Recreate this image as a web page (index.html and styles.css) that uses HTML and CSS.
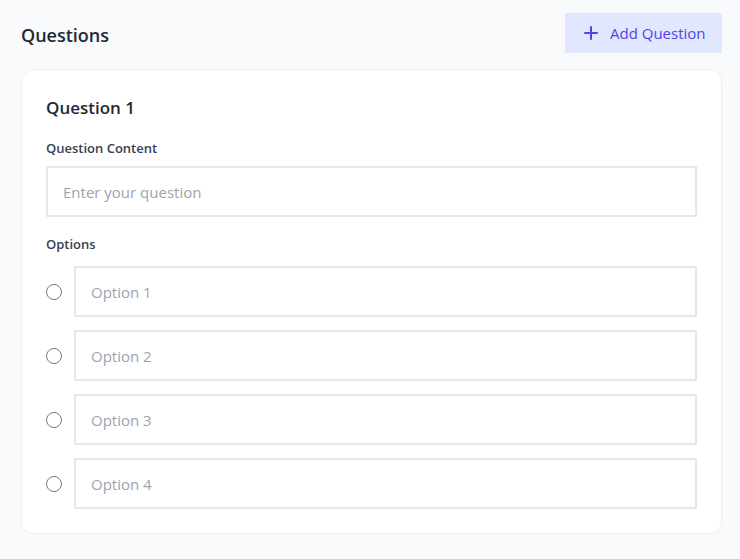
FILE: index.html
```html
<!DOCTYPE html>
<html lang="en">
<head>
<meta charset="utf-8">
<title>Questions</title>
<link rel="stylesheet" href="styles.css">
</head>
<body>
<main class="page">
  <header class="page-header">
    <h1 class="page-title">Questions</h1>
    <button class="add-btn" type="button">
      <svg class="add-icon" width="14" height="14" viewBox="0 0 14 14" aria-hidden="true">
        <path d="M7 1v12M1 7h12" stroke="currentColor" stroke-width="2" stroke-linecap="round" fill="none"/>
      </svg>
      <span>Add Question</span>
    </button>
  </header>

  <section class="card">
    <h2 class="card-title">Question 1</h2>
    <label class="field-label">Question Content</label>
    <input class="text-input" type="text" placeholder="Enter your question">

    <div class="field-label options-label">Options</div>
    <div class="options">
      <div class="option-row">
        <input class="radio" type="radio" name="opt">
        <input class="text-input" type="text" placeholder="Option 1">
      </div>
      <div class="option-row">
        <input class="radio" type="radio" name="opt">
        <input class="text-input" type="text" placeholder="Option 2">
      </div>
      <div class="option-row">
        <input class="radio" type="radio" name="opt">
        <input class="text-input" type="text" placeholder="Option 3">
      </div>
      <div class="option-row">
        <input class="radio" type="radio" name="opt">
        <input class="text-input" type="text" placeholder="Option 4">
      </div>
    </div>
  </section>
</main>
</body>
</html>
```

FILE: styles.css
```css
* { box-sizing: border-box; }

html, body {
  margin: 0;
  background: #f9fafb;
  font-family: "Open Sans", "Noto Sans", Arial, sans-serif;
  color: #1f2937;
}

.page {
  padding: 13px 18px 24px 21px;
}

.page-header {
  display: flex;
  align-items: center;
  justify-content: space-between;
  height: 40px;
}

.page-title {
  margin: 0;
  padding-top: 4px;
  font-size: 18px;
  font-weight: 600;
  color: #1f2937;
}

.add-btn {
  display: flex;
  align-items: center;
  gap: 12px;
  height: 40px;
  width: 157px;
  padding: 0 0 0 19px;
  border: none;
  background: #e0e7ff;
  color: #4f46e5;
  font-family: inherit;
  font-size: 15px;
  cursor: pointer;
}

.add-icon { display: block; }

.card {
  margin-top: 16px;
  background: #ffffff;
  border: 1px solid #eeeff2;
  border-radius: 12px;
  padding: 24px;
}

.card-title {
  margin: 0;
  font-size: 17px;
  font-weight: 600;
  line-height: 28px;
  color: #1f2937;
}

.field-label {
  display: block;
  margin-top: 16px;
  margin-bottom: 8px;
  font-size: 13px;
  font-weight: 600;
  line-height: 20px;
  color: #374151;
}

.options-label {
  margin-top: 17px;
  margin-bottom: 12px;
}

.text-input {
  display: block;
  width: 100%;
  height: 51px;
  border: 2px solid #e5e7eb;
  border-radius: 0;
  padding: 0 15px;
  font-family: inherit;
  font-size: 15px;
  color: #1f2937;
  background: #ffffff;
  outline: none;
}

.text-input::placeholder {
  color: #9ca3af;
}

.options {
  display: flex;
  flex-direction: column;
  gap: 13px;
}

.option-row {
  display: flex;
  align-items: center;
  gap: 12px;
}

.radio {
  appearance: none;
  -webkit-appearance: none;
  flex: 0 0 16px;
  width: 16px;
  height: 16px;
  margin: 0;
  border: 1px solid #767676;
  border-radius: 50%;
  background: #fff;
}
```
